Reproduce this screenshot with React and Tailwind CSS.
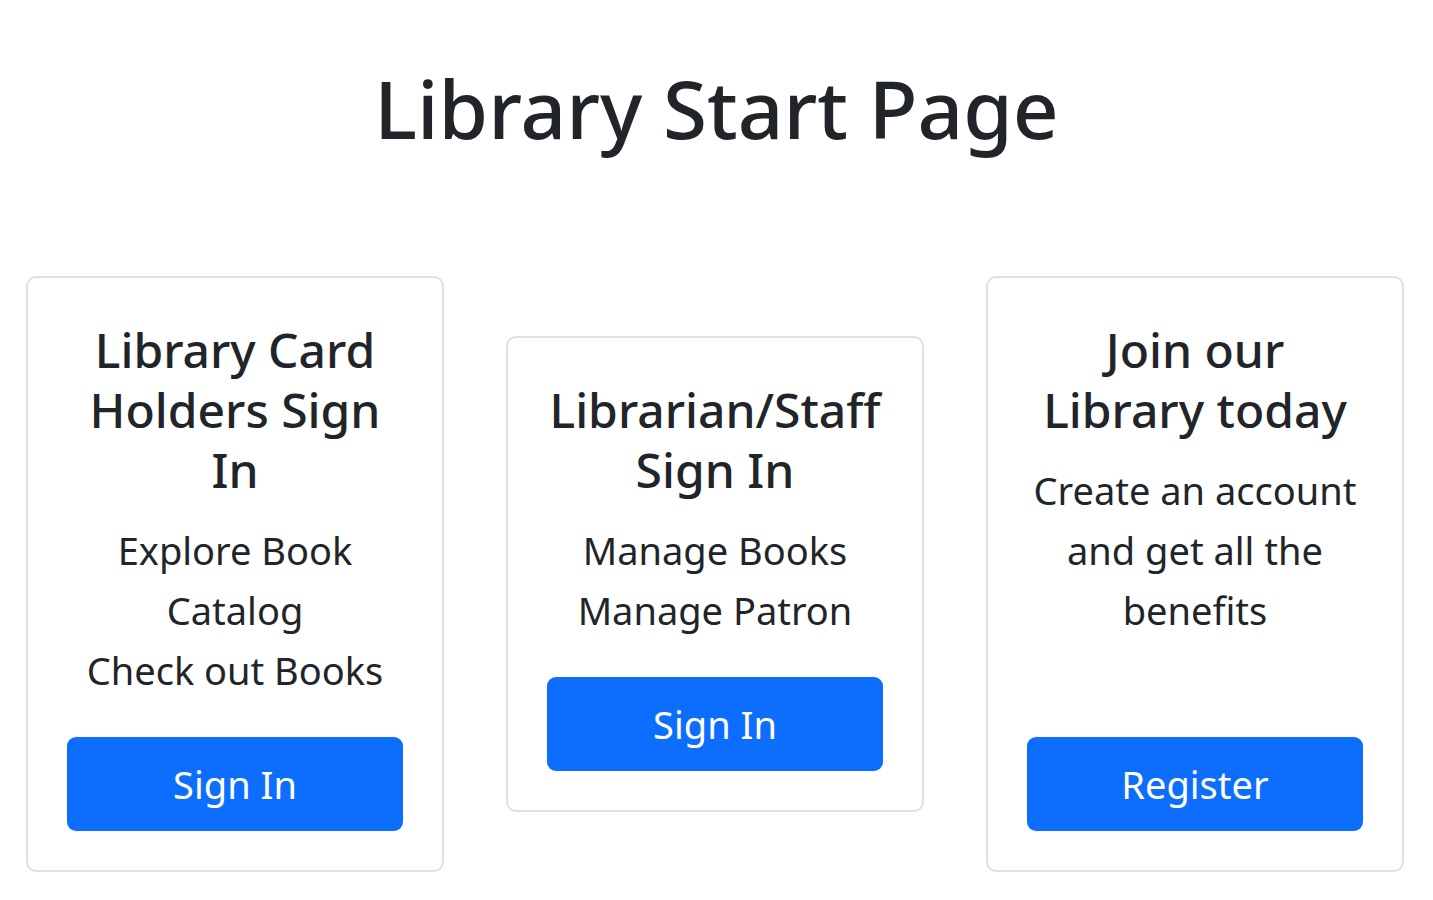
import React from 'react'

const cards = [
  {
    title: 'Library Card Holders Sign In',
    lines: ['Explore Book Catalog', 'Check out Books'],
    action: 'Sign In',
    align: 'self-stretch',
  },
  {
    title: 'Librarian/Staff Sign In',
    lines: ['Manage Books', 'Manage Patron'],
    action: 'Sign In',
    align: 'self-center',
  },
  {
    title: 'Join our Library today',
    lines: ['Create an account and get all the benefits'],
    action: 'Register',
    align: 'self-stretch',
  },
]

function Card({ title, lines, action, align }) {
  return (
    <div className={`${align} w-[418px] flex flex-col border-2 border-[#dee2e6] rounded-[10px] bg-white pt-[42px] px-[39px] pb-[39px] text-center`}>
      <h3 className="text-[48px] leading-[60px] font-medium text-[#212529] mb-[20px]">{title}</h3>
      {lines.map((l, i) => (
        <p key={i} className="text-[38px] leading-[60px] text-[#212529]">{l}</p>
      ))}
      <button className="mt-auto pt-[37px] w-full">
        <span className="flex items-center justify-center h-[94px] w-full rounded-[9px] bg-[#0d6efd] text-white text-[38px]">
          {action}
        </span>
      </button>
    </div>
  )
}

export default function App() {
  return (
    <div className="min-h-screen bg-white text-[#212529]" style={{ fontFamily: '"Noto Sans", "Open Sans", sans-serif' }}>
      <h1 className="pt-[56px] text-center text-[80px] leading-[104px] font-medium">Library Start Page</h1>
      <div className="flex items-stretch gap-[62px] pl-[26px] mt-[116px]">
        {cards.map(c => (
          <Card key={c.title} {...c} />
        ))}
      </div>
    </div>
  )
}
